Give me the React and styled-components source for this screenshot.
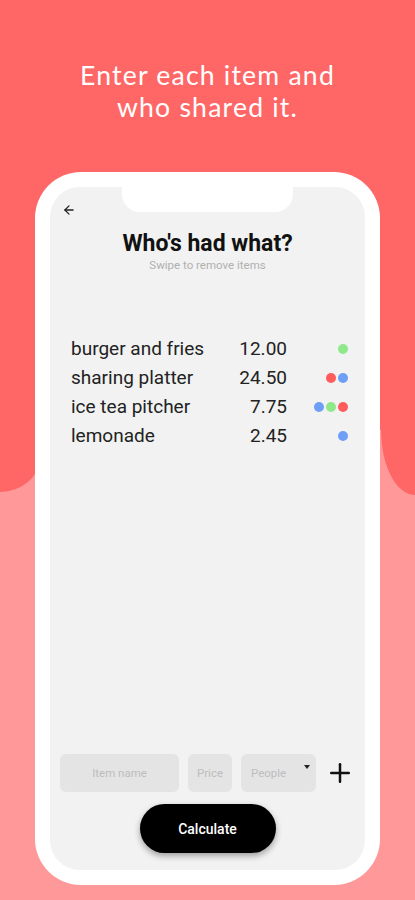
import React from 'react';
import styled, { createGlobalStyle } from 'styled-components';
import { ArrowLeft, Plus } from 'lucide-react';

const GlobalStyle = createGlobalStyle`
  body {
    margin: 0;
    font-family: Roboto, "Liberation Sans", sans-serif;
  }
`;

const DARK = '#FF6767';
const LIGHT = '#FF9898';

const Page = styled.div`
  position: relative;
  width: 415px;
  min-height: 900px;
  overflow: hidden;
  background: linear-gradient(${DARK} 0 430px, ${LIGHT} 430px);
  padding-top: 59px;
  box-sizing: border-box;

  &::before,
  &::after {
    content: '';
    position: absolute;
    top: 380px;
    background: ${DARK};
  }

  &::before {
    left: 0;
    width: 40px;
    height: 112px;
    border-bottom-right-radius: 40px 35px;
  }

  &::after {
    right: 0;
    width: 34px;
    height: 115px;
    border-bottom-left-radius: 34px 65px;
  }
`;

const Headline = styled.h1`
  margin: 0;
  font-family: Lato, "Open Sans", sans-serif;
  font-weight: 400;
  font-size: 26.6px;
  line-height: 32px;
  letter-spacing: 1.2px;
  color: #fff;
  text-align: center;
`;

const Phone = styled.div`
  position: relative;
  z-index: 1;
  width: 345px;
  height: 713px;
  margin: 49px auto 0;
  padding: 15px;
  box-sizing: border-box;
  background: #fff;
  border-radius: 46px;
`;

const Notch = styled.div`
  position: absolute;
  top: 15px;
  left: calc(50% - 86px);
  width: 171px;
  height: 25px;
  background: #fff;
  border-radius: 0 0 18px 18px;
`;

const Screen = styled.div`
  height: 100%;
  display: flex;
  flex-direction: column;
  background: #f2f2f2;
  border-radius: 30px;
  padding: 16px 0 17px;
  box-sizing: border-box;
`;

const BackButton = styled.div`
  display: flex;
  color: #222;
  margin-left: 12px;
`;

const Title = styled.h2`
  margin: 13px 0 0;
  font-size: 23px;
  line-height: 27px;
  font-weight: 700;
  color: #111;
  text-align: center;
`;

const Subtitle = styled.p`
  margin: 1px 0 0;
  font-size: 11.5px;
  line-height: 14px;
  color: #b0b0b0;
  text-align: center;
`;

const ItemList = styled.div`
  flex: 1;
  display: grid;
  grid-template-columns: 1fr auto 61px;
  grid-auto-rows: 29px;
  align-items: center;
  align-content: start;
  margin: 62px 17px 0 21px;
`;

const Name = styled.span`
  font-size: 19px;
  color: #222;
`;

const Price = styled.span`
  font-size: 19px;
  color: #222;
  text-align: right;
`;

const Dots = styled.span`
  display: flex;
  justify-content: flex-end;
  gap: 2px;
`;

const Dot = styled.span`
  width: 10px;
  height: 10px;
  border-radius: 50%;
  background: ${(props) => props.color};
`;

const FormRow = styled.div`
  display: flex;
  align-items: center;
  gap: 9px;
  padding-left: 10px;
`;

const Field = styled.div`
  position: relative;
  flex-shrink: 0;
  width: ${(props) => props.width}px;
  height: 38px;
  display: flex;
  align-items: center;
  justify-content: ${(props) => (props.left ? 'flex-start' : 'center')};
  padding-left: ${(props) => (props.left ? '10px' : '0')};
  box-sizing: border-box;
  background: #e4e4e4;
  border-radius: 6px;
  font-size: 11.5px;
  color: #bdbdbd;
`;

const Caret = styled.span`
  position: absolute;
  top: 11px;
  right: 6px;
  border-left: 3px solid transparent;
  border-right: 3px solid transparent;
  border-top: 4px solid #222;
`;

const AddButton = styled.div`
  display: flex;
  flex-shrink: 0;
  color: #111;
`;

const CalcButton = styled.button`
  align-self: center;
  width: 136px;
  height: 49px;
  margin-top: 12px;
  border: none;
  border-radius: 25px;
  background: #000;
  color: #fff;
  font-family: Roboto, sans-serif;
  font-size: 14px;
  font-weight: 500;
  box-shadow: 0 3px 6px rgba(0, 0, 0, 0.35);
`;

const GREEN = '#8fe889';
const RED = '#ff5c5c';
const BLUE = '#6c9ff5';

const items = [
  { name: 'burger and fries', price: '12.00', people: [GREEN] },
  { name: 'sharing platter', price: '24.50', people: [RED, BLUE] },
  { name: 'ice tea pitcher', price: '7.75', people: [BLUE, GREEN, RED] },
  { name: 'lemonade', price: '2.45', people: [BLUE] },
];

export default function App() {
  return (
    <Page>
      <GlobalStyle />
      <Headline>
        Enter each item and
        <br />
        who shared it.
      </Headline>
      <Phone>
        <Screen>
          <BackButton>
            <ArrowLeft size={14} strokeWidth={2.2} />
          </BackButton>
          <Title>Who's had what?</Title>
          <Subtitle>Swipe to remove items</Subtitle>
          <ItemList>
            {items.map((item) => (
              <React.Fragment key={item.name}>
                <Name>{item.name}</Name>
                <Price>{item.price}</Price>
                <Dots>
                  {item.people.map((c, i) => (
                    <Dot key={i} color={c} />
                  ))}
                </Dots>
              </React.Fragment>
            ))}
          </ItemList>
          <FormRow>
            <Field width={119}>Item name</Field>
            <Field width={44}>Price</Field>
            <Field width={75} left>
              People
              <Caret />
            </Field>
            <AddButton>
              <Plus size={30} strokeWidth={2} />
            </AddButton>
          </FormRow>
          <CalcButton>Calculate</CalcButton>
        </Screen>
        <Notch />
      </Phone>
    </Page>
  );
}
